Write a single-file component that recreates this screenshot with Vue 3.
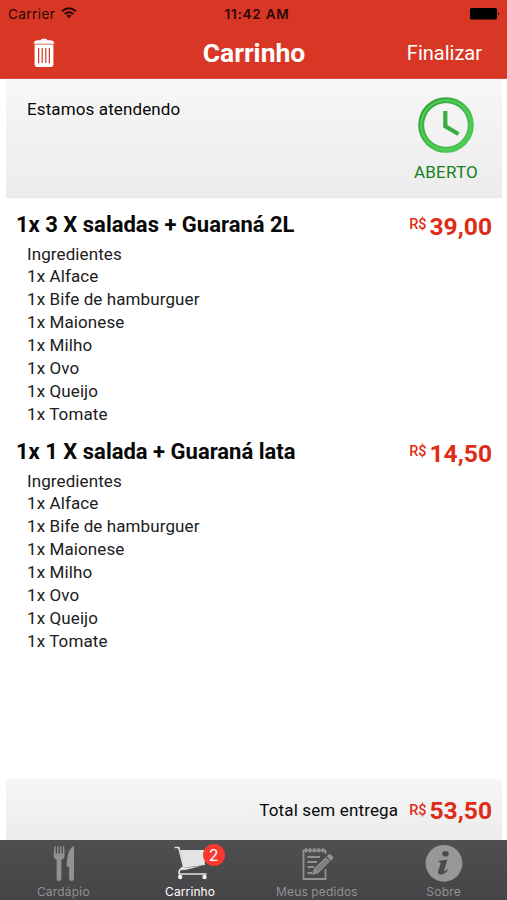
<script setup>
const ingredients = ['Alface', 'Bife de hamburguer', 'Maionese', 'Milho', 'Ovo', 'Queijo', 'Tomate']
const items = [
  { name: '1x 3 X saladas + Guaraná 2L', price: '39,00' },
  { name: '1x 1 X salada + Guaraná lata', price: '14,50' },
]
</script>

<template>
  <div class="screen">
    <header>
      <div class="status">
        <div class="carrier">
          <span>Carrier</span>
          <svg width="16" height="12" viewBox="0 0 16 12" fill="none" stroke="#2a0704" stroke-width="2">
            <path d="M1 4.2Q8-1.8 15 4.2M3.7 7Q8 3.4 12.3 7" />
            <path d="M5.6 8.6Q8 6.8 10.4 8.6L8 11.4Z" fill="#2a0704" stroke="none" />
          </svg>
        </div>
        <span class="time">11:42 AM</span>
        <svg class="battery" width="30" height="12" viewBox="0 0 30 12">
          <rect width="27" height="11.5" rx="1.5" />
          <path d="M28 3.8q1.8 2 0 4Z" />
        </svg>
      </div>
      <nav class="bar">
        <svg class="trash" width="22" height="30" viewBox="0 0 22 30">
          <path fill="#fff" d="M.5 5.8Q1 2.4 5 2.3H7.5Q8 .8 9.5.8h3Q14 .8 14.5 2.3H17Q21 2.4 21.5 5.8ZM1.6 6.6H20.4V26.5Q20.4 29 17.5 29H4.5Q1.6 29 1.6 26.5Z" />
          <path fill="none" stroke="#d93726" stroke-width="1.2" d="M5.6 10V25M9.2 10V25M12.8 10V25M16.4 10V25" />
        </svg>
        <h1>Carrinho</h1>
        <span class="finish">Finalizar</span>
      </nav>
    </header>

    <section class="notice">
      <p>Estamos atendendo</p>
      <div class="open">
        <svg width="56" height="56" viewBox="0 0 56 56">
          <defs>
            <linearGradient id="ring" x1="0" y1="0" x2="1" y2="1">
              <stop offset="0" stop-color="#329a39" />
              <stop offset=".5" stop-color="#43b84b" />
              <stop offset="1" stop-color="#55c95b" />
            </linearGradient>
          </defs>
          <circle cx="28" cy="28" r="25" fill="none" stroke="url(#ring)" stroke-width="5.6" />
          <circle cx="28" cy="28" r="24.8" fill="none" stroke="#4bd354" stroke-width="2" />
          <circle cx="28" cy="28" r="22.3" fill="none" stroke="#43a547" stroke-width=".8" />
          <path d="M27.3 14V29.2L40.5 37" fill="none" stroke="#38ad40" stroke-width="4.2" />
        </svg>
        <span>ABERTO</span>
      </div>
    </section>

    <main>
      <article v-for="item in items" :key="item.name">
        <div class="title-row">
          <h2>{{ item.name }}</h2>
          <div class="price"><small>R$</small><b>{{ item.price }}</b></div>
        </div>
        <ul>
          <li>Ingredientes</li>
          <li v-for="ingredient in ingredients" :key="ingredient">1x {{ ingredient }}</li>
        </ul>
      </article>
    </main>

    <section class="total">
      <span>Total sem entrega</span>
      <div class="price"><small>R$</small><b>53,50</b></div>
    </section>

    <footer>
      <div class="tab">
        <svg width="40" height="40" viewBox="0 0 40 40" fill="#929293">
          <path d="M11.4 6.2h1.3v7.3h1.5V6.2h1.4v7.3h1.5V6.2h1.4v7.3h1.4V6.2h1.3l.4 9.3q0 3-3.2 4.2V38q0 3-2.4 3t-2.4-3V19.7q-3-1.2-3-4.2Z" />
          <path d="M31 5.7V38q0 3-2.4 3t-2.5-3V26.7h-2.4Q23.5 10.2 31 5.7Z" />
        </svg>
        <span>Cardápio</span>
      </div>
      <div class="tab active">
        <svg width="40" height="40" viewBox="0 0 40 40">
          <path d="M10.2 10H37L34.5 24 14 26.7Z" fill="#e4e4e4" />
          <path d="M5.2 7.5H8.8L13.6 26.9L34.3 24.3M13.6 26.9Q8 29.5 9.2 34H36" fill="none" stroke="#e4e4e4" stroke-width="1.6" stroke-linejoin="round" stroke-linecap="round" />
          <path d="M13 27.6Q21 27.8 32.5 25Q21 29.6 10.5 30.3Z" fill="#e4e4e4" />
          <circle cx="10.2" cy="37" r="2.2" fill="#f5f5f5" />
          <circle cx="34.5" cy="37" r="2.2" fill="#f5f5f5" />
        </svg>
        <i class="badge">2</i>
        <span>Carrinho</span>
      </div>
      <div class="tab orders">
        <svg width="40" height="40" viewBox="0 0 40 40" fill="none" stroke="#929293" stroke-width="1.8">
          <path d="M28.5 14V10.5H6.5V39H28.5V29M9 8V12.5M13.2 8V12.5M17.4 8V12.5M21.6 8V12.5M25.8 8V12.5M10.5 17H23M10.5 22H20M10.5 27H17M10.5 33H15" />
          <path fill="#929293" stroke="none" d="M17 28.6 28.8 17.2 32.8 21.2 21.3 33 15.1 35.1ZM29.8 16.2l1.5-1.5q1.3-1.2 2.6 0l1.8 1.8q1.3 1.3 0 2.6l-1.9 1.9Z" />
          <path stroke="#4c4b4d" stroke-width=".7" d="m18.8 29.8 10.5-10.2M20.2 31.2l10.5-10.3" />
        </svg>
        <span>Meus pedidos</span>
      </div>
      <div class="tab about">
        <svg width="40" height="40" viewBox="0 0 40 40">
          <circle cx="20" cy="23.3" r="18.4" fill="#979797" />
          <ellipse cx="21.5" cy="13.7" rx="3.3" ry="2.8" fill="#4b4a4c" />
          <path fill="#4b4a4c" d="M14.6 20.9 23.4 19.6 20.2 30.2q-.5 2.2 2.8-.6l1 .7q-4 4.5-7.4 4.3-3.5-.2-2.2-4l2.1-6.7q.7-2-1.9-1.8Z" />
        </svg>
        <span>Sobre</span>
      </div>
    </footer>
  </div>
</template>

<style>
body { margin: 0; background: #fff; }
</style>
<style scoped>
* { box-sizing: border-box; }
.screen { width: 507px; height: 900px; display: flex; flex-direction: column; font-family: Roboto, "Liberation Sans", sans-serif; color: #080808; overflow: hidden; }
svg { display: block; overflow: visible; }
h1, h2, p, ul { margin: 0; padding: 0; }
header { height: 79px; flex: none; background: #d93726; border-bottom: 1px solid #da4b3c; }
.status { display: grid; grid-template-columns: 1fr auto 1fr; height: 28px; padding: 0 7px 0 8px; align-items: center; font: 13.5px/28px Inter, Roboto, sans-serif; color: #2a0704; }
.carrier { display: flex; align-items: center; gap: 6px; }
.carrier span { letter-spacing: .45px; }
.carrier svg { margin-top: -2px; }
.time { font-weight: 600; font-size: 13.5px; letter-spacing: .8px; margin-left: 6px; }
.battery { justify-self: end; }
.bar { display: grid; grid-template-columns: 1fr auto 1fr; height: 50px; align-items: center; padding: 0 25px 0 33px; color: #fff; }
.bar h1 { font-size: 26.5px; line-height: 50px; font-weight: 700; letter-spacing: 0; margin-right: 7px; }
.finish { justify-self: end; font-size: 20px; letter-spacing: 0; }
.notice { height: 119px; flex: none; margin: 0 5px 0 6px; padding: 20px 24px 0 21px; display: flex; justify-content: space-between; background: linear-gradient(#f7f7f7, #ececec); border-bottom: 1px solid #e2e2e2; font-size: 17px; line-height: 21px; }
.notice p { letter-spacing: .12px; }
.open { width: 64px; margin-top: -2px; display: flex; flex-direction: column; align-items: center; color: #168022; }
.open span { margin-top: 9px; font-size: 17px; letter-spacing: .2px; }
main { flex: 1; min-height: 0; padding: 12px 15px 0 16px; }
article { height: 227px; }
.title-row { display: flex; justify-content: space-between; height: 32.6px; }
h2 { font-size: 22px; line-height: 30px; font-weight: 700; }
.price { display: flex; align-items: flex-start; gap: 3px; color: #df2c16; }
.price b { font-size: 24.6px; line-height: 34px; font-weight: 700; }
.price small { font-size: 14.5px; line-height: 30px; font-weight: 500; }
ul { list-style: none; margin-left: 11px; }
li { font-size: 17px; line-height: 22.85px; letter-spacing: .1px; color: #202020; }
.total { height: 61px; flex: none; margin: 0 5px 0 6px; padding: 0 10px; display: flex; justify-content: flex-end; gap: 11px; background: linear-gradient(#f6f6f6, #ececec); font-size: 17px; line-height: 62px; }
.total > span { letter-spacing: .14px; }
.total .price { margin-top: 14px; }
.total b { line-height: 36px; }
.total small { line-height: 36px; }
footer { height: 60px; flex: none; display: grid; grid-template-columns: repeat(4, 1fr); background: linear-gradient(#4f4e50, #454446); color: #929293; }
.tab { position: relative; display: flex; flex-direction: column; align-items: center; font: 12px/15px Inter, Roboto, sans-serif; letter-spacing: .2px; }
.tab span { margin-top: 4px; white-space: nowrap; }
.tab.active { color: #fff; letter-spacing: .1px; }
.orders { letter-spacing: .12px; }
.badge { position: absolute; left: 76px; top: 4px; width: 22px; height: 22px; border-radius: 50%; background: #f83831; color: #fff; font: 16px/22px Inter, Roboto, sans-serif; letter-spacing: 0; text-align: center; }
</style>
